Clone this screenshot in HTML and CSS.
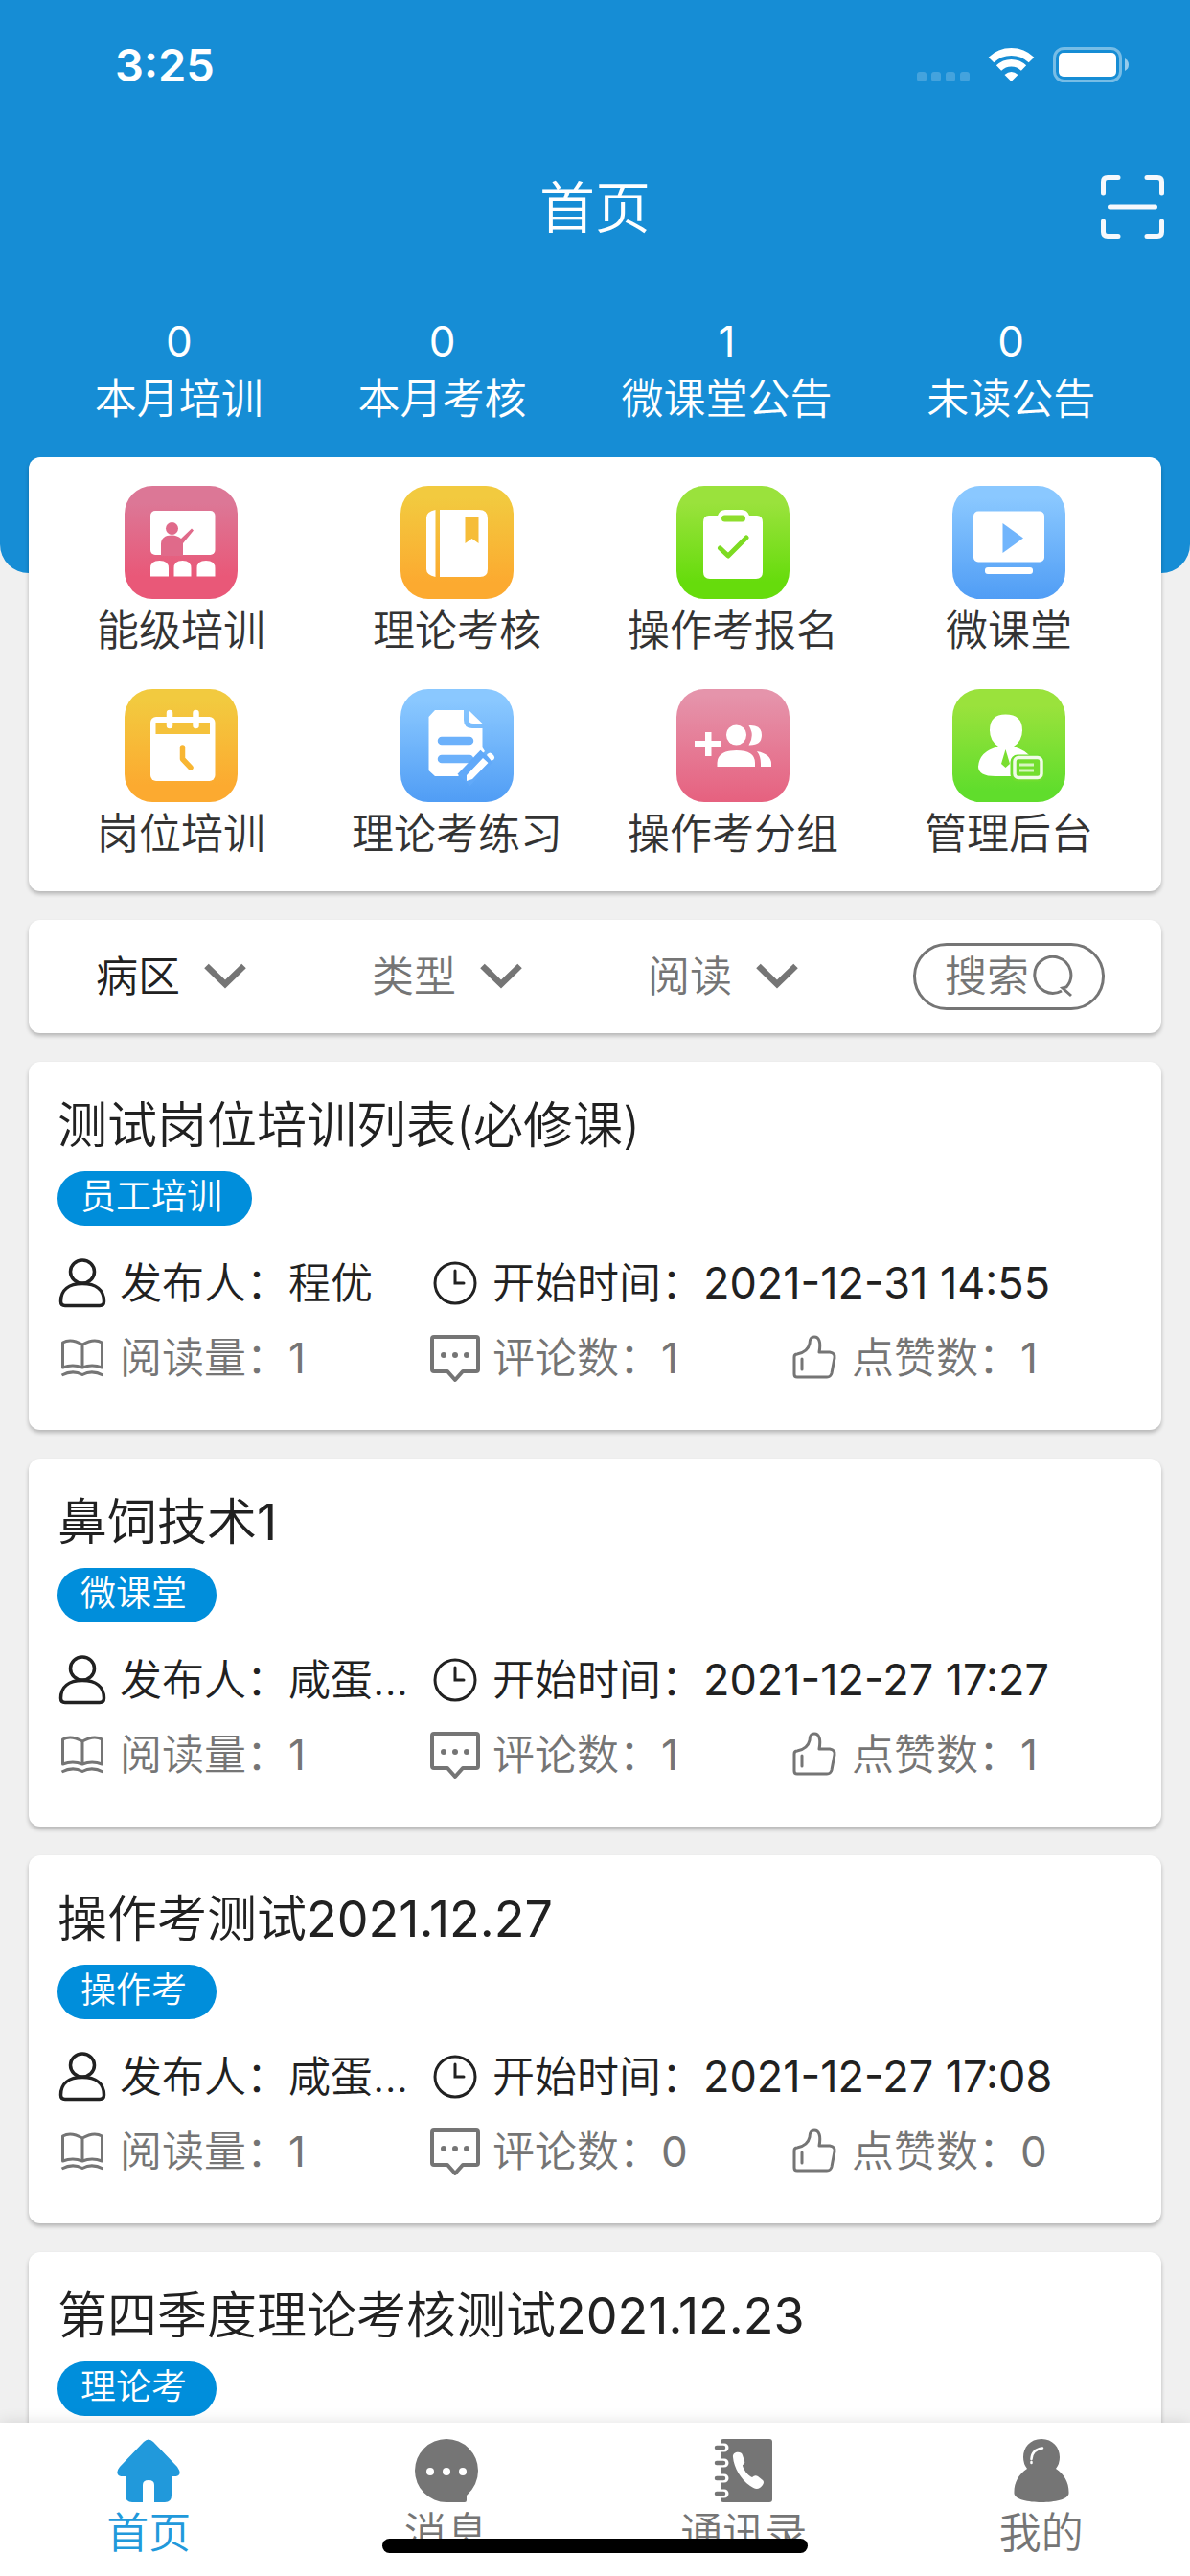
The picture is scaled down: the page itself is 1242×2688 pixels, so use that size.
FILE: index.html
```html
<!DOCTYPE html>
<html lang="zh-CN">
<head>
<meta charset="utf-8">
<meta name="viewport" content="width=device-width, initial-scale=1">
<title>首页</title>
<link rel="stylesheet" href="styles.css">
</head>
<body>
<svg class="sprite" aria-hidden="true">
  <symbol id="i-user" viewBox="0 0 52 52"><g fill="none" stroke="currentColor" stroke-width="3.500"><ellipse cx="26" cy="14" rx="12.500" ry="12"/><path d="M3.500 45C3.500 33 12 26.500 26 26.500S48.500 33 48.500 45Q48.500 49.500 44 49.500H8Q3.500 49.500 3.500 45z"/></g></symbol>
  <symbol id="i-clock" viewBox="0 0 52 52"><g fill="none" stroke="currentColor" stroke-width="3" stroke-linecap="round"><circle cx="26" cy="26" r="21"/><path d="M26 13V26H35"/></g></symbol>
  <symbol id="i-book" viewBox="0 0 52 52"><path fill="none" stroke="currentColor" stroke-width="3" stroke-linejoin="round" d="M26 12Q14 5 5.500 10V36Q16 32 26 36Q36 32 46.500 36V10Q38 5 26 12V36M4.500 44Q16 38 26 43.500Q36 38 47.500 44"/></symbol>
  <symbol id="i-comment" viewBox="0 0 52 52"><path fill="none" stroke="currentColor" stroke-width="4" stroke-linejoin="round" d="M4 4H48Q50 4 50 6V38Q50 40 48 40H34L26 49L18 40H4Q2 40 2 38V6Q2 4 4 4z"/><g fill="currentColor"><circle cx="14" cy="23" r="3"/><circle cx="26" cy="23" r="3"/><circle cx="38" cy="23" r="3"/></g></symbol>
  <symbol id="i-thumb" viewBox="0 0 52 52"><path fill="none" stroke="currentColor" stroke-width="3" stroke-linecap="round" stroke-linejoin="round" d="M5 25Q5 22 8 22Q19 20 21 11C21 6 23 4 26 4C31 4 33 10 31 20H42Q48 21 47 26L44 42Q43 46 39 46H8Q5 46 5 43zM13 27V38"/></symbol>
  <symbol id="i-down" viewBox="0 0 44 28"><path fill="none" stroke="currentColor" stroke-width="6.500" d="M2.500 3L22 22L41.500 3"/></symbol>
</svg>

<div class="app">
  <header class="header">
    <div class="status">
      <time class="clock">3:25</time>
      <svg class="signals" viewBox="0 0 222 38" aria-hidden="true">
        <g fill="#fff" fill-opacity=".2"><rect y="26" width="10" height="10" rx="3"/><rect x="15" y="26" width="10" height="10" rx="3"/><rect x="30" y="26" width="10" height="10" rx="3"/><rect x="45" y="26" width="10" height="10" rx="3"/></g>
        <g fill="none" stroke="#fff"><path stroke-width="8" d="M77.500 13.500A30 30 0 0 1 119.500 13.500"/><path stroke-width="7.500" d="M85.500 22A18.500 18.500 0 0 1 111.500 22"/></g>
        <path fill="#fff" d="M98.500 36L91.500 29Q98.500 23 105.500 29z"/>
        <rect x="143.500" y="1.500" width="69" height="34" rx="10" fill="none" stroke="#fff" stroke-opacity=".42" stroke-width="3"/>
        <rect x="148" y="6" width="60" height="25" rx="5" fill="#fff"/>
        <path fill="#fff" fill-opacity=".55" d="M217 12Q221 14 221 18.500T217 25z"/>
      </svg>
    </div>
    <div class="nav">
      <h1 class="nav-title">首页</h1>
      <button class="scan" type="button" aria-label="扫一扫">
        <svg viewBox="0 0 66 66"><path fill="none" stroke="#f5f8fc" stroke-width="5" stroke-linecap="round" d="M2.500 18V7Q2.500 2.500 7 2.500H18M48 2.500H59Q63.500 2.500 63.500 7V18M63.500 48V59Q63.500 63.500 59 63.500H48M18 63.500H7Q2.500 63.500 2.500 59V48M9.500 33H56.500"/></svg>
      </button>
    </div>
    <dl class="stats">
      <div class="stat"><dt>本月培训</dt><dd>0</dd></div>
      <div class="stat"><dt>本月考核</dt><dd>0</dd></div>
      <div class="stat"><dt>微课堂公告</dt><dd>1</dd></div>
      <div class="stat"><dt>未读公告</dt><dd>0</dd></div>
    </dl>
  </header>

  <main class="content">
    <nav class="panel menu">
      <a class="menu-item" href="#"><svg class="tile tile-pink" viewBox="0 0 118 118"><g fill="#fff"><rect x="27" y="26" width="67.500" height="46" rx="5"/><path d="M27 94.500V86Q27 78 36.500 78T46 86V94.500zM51.500 94.500V86Q51.500 78 60.500 78T69.500 86V94.500zM75.500 94.500V86Q75.500 78 85 78T94.500 86V94.500z"/></g><g fill="#e06a8a"><circle cx="49.500" cy="44.500" r="6.500"/><path d="M38 73V61Q38 51.500 49.500 51.500Q55 51.500 59 55L70 44.500L72 46.500L61 60V73z"/></g></svg>能级培训</a>
      <a class="menu-item" href="#"><svg class="tile tile-gold" viewBox="0 0 118 118"><path fill="#fff" d="M36.500 25V95Q27 93 27 87V33Q27 27 36.500 25zM41 25H82Q91 25 91 34V87Q91 95 83 95H41z"/><path fill="#f6bd38" d="M67.500 33H81.500V60L74.500 55L67.500 60z"/></svg>理论考核</a>
      <a class="menu-item" href="#"><svg class="tile tile-green" viewBox="0 0 118 118"><path fill="#fff" d="M34 31H43Q45 25 51 25H68Q74 25 76 31H84Q90 31 90 38V90Q90 97 83 97H35Q28 97 28 90V38Q28 31 34 31z"/><rect x="47" y="30.500" width="25" height="7" rx="3.500" fill="#8ede2d"/><path fill="none" stroke="#7ddb22" stroke-width="5" stroke-linecap="round" stroke-linejoin="round" d="M45.500 65L54 73L73 54"/></svg>操作考报名</a>
      <a class="menu-item" href="#"><svg class="tile tile-blue" viewBox="0 0 118 118"><rect x="22" y="26.500" width="74" height="53" rx="5" fill="#fff"/><rect x="34" y="85" width="50" height="7" rx="3" fill="#fff"/><path fill="#71b5fc" d="M52.500 39L74 54.500L52.500 70z"/></svg>微课堂</a>
      <a class="menu-item" href="#"><svg class="tile tile-gold" viewBox="0 0 118 118"><rect x="27" y="29" width="67.500" height="67" rx="6" fill="#fff"/><path fill="#f5c23b" d="M32.500 35H89V47H32.500z"/><path fill="none" stroke="#fff" stroke-width="6.500" stroke-linecap="round" d="M47 25V38M74.500 25V38"/><path fill="none" stroke="#f8b633" stroke-width="5.500" stroke-linecap="round" stroke-linejoin="round" d="M60.500 61V73L69 82"/></svg>岗位培训</a>
      <a class="menu-item" href="#"><svg class="tile tile-blue" viewBox="0 0 118 118"><path fill="#fff" d="M36 22H66V32Q66 41 75 41H85.500V61L88 65L60 91H36L29.500 85V29zM71 22L85.500 36H76Q71 36 71 31z"/><path fill="none" stroke="#6cb1fb" stroke-width="8.500" stroke-linecap="round" d="M43 54H72M43 73H72"/><path fill="none" stroke="#61a9f9" stroke-width="18" d="M66 95L90 70"/><path fill="#fff" d="M69 96V90L86 72L91.500 77L75 94zM90 69Q93 64 97 69Q100 73 95 75z"/></svg>理论考练习</a>
      <a class="menu-item" href="#"><svg class="tile tile-rose" viewBox="0 0 118 118"><g fill="#fff"><path d="M30 45H36.500V54H47V61H36.500V70H30V61H19V54H30zM75.500 38Q89 37 89 48T75.500 58.500Q82 48 75.500 38zM84 65Q99 68 99 78V81H88V78Q88 70 84 65zM42.500 81V77Q43 64 62.500 64T82 77V81z"/><circle cx="62.500" cy="48" r="10.500"/></g></svg>操作考分组</a>
      <a class="menu-item" href="#"><svg class="tile tile-lime" viewBox="0 0 118 118"><path fill="#fff" d="M55.500 26.500Q73 26.500 73 43Q73 54 64 60Q75 63 83 72L88 91H45Q27 91 27 81Q28 65 48 60Q39 54 39 43Q39 26.500 55.500 26.500z"/><path fill="#7ade30" d="M55.500 63L60 78L55.500 82L51 78z"/><rect x="64" y="72" width="29" height="21" rx="4" fill="#70de2e" stroke="#70de2e" stroke-width="7"/><rect x="65" y="71.500" width="28" height="21" rx="4" fill="#73de2e" stroke="#f0fbe8" stroke-width="3.500"/><path stroke="#d5f5c0" stroke-width="3" d="M70 79H85M70 85H85"/></svg>管理后台</a>
    </nav>

    <form class="panel filters">
      <div class="filter filter-active"><select aria-label="病区"><option>病区</option></select><svg class="chevron"><use href="#i-down"/></svg></div>
      <div class="filter"><select aria-label="类型"><option>类型</option></select><svg class="chevron"><use href="#i-down"/></svg></div>
      <div class="filter"><select aria-label="阅读"><option>阅读</option></select><svg class="chevron"><use href="#i-down"/></svg></div>
      <button class="search" type="button">搜索<svg viewBox="0 0 44 44"><path fill="none" stroke="currentColor" stroke-width="3" d="M32 37A19 19 0 1 1 37 33L33 34L42 42"/></svg></button>
    </form>

    <article class="panel post">
      <h2 class="post-title">测试岗位培训列表(必修课)</h2>
      <span class="badge">员工培训</span>
      <div class="meta"><span class="cell"><svg class="icon"><use href="#i-user"/></svg>发布人：程优</span><span class="cell cell-wide"><svg class="icon"><use href="#i-clock"/></svg><span>开始时间：<time>2021-12-31 14:55</time></span></span></div>
      <div class="meta meta-muted"><span class="cell"><svg class="icon"><use href="#i-book"/></svg><span>阅读量：<b>1</b></span></span><span class="cell"><svg class="icon"><use href="#i-comment"/></svg><span>评论数：<b>1</b></span></span><span class="cell"><svg class="icon"><use href="#i-thumb"/></svg><span>点赞数：<b>1</b></span></span></div>
    </article>
    <article class="panel post">
      <h2 class="post-title">鼻饲技术<b>1</b></h2>
      <span class="badge">微课堂</span>
      <div class="meta"><span class="cell"><svg class="icon"><use href="#i-user"/></svg>发布人：咸蛋...</span><span class="cell cell-wide"><svg class="icon"><use href="#i-clock"/></svg><span>开始时间：<time>2021-12-27 17:27</time></span></span></div>
      <div class="meta meta-muted"><span class="cell"><svg class="icon"><use href="#i-book"/></svg><span>阅读量：<b>1</b></span></span><span class="cell"><svg class="icon"><use href="#i-comment"/></svg><span>评论数：<b>1</b></span></span><span class="cell"><svg class="icon"><use href="#i-thumb"/></svg><span>点赞数：<b>1</b></span></span></div>
    </article>
    <article class="panel post">
      <h2 class="post-title">操作考测试<b>2021.12.27</b></h2>
      <span class="badge">操作考</span>
      <div class="meta"><span class="cell"><svg class="icon"><use href="#i-user"/></svg>发布人：咸蛋...</span><span class="cell cell-wide"><svg class="icon"><use href="#i-clock"/></svg><span>开始时间：<time>2021-12-27 17:08</time></span></span></div>
      <div class="meta meta-muted"><span class="cell"><svg class="icon"><use href="#i-book"/></svg><span>阅读量：<b>1</b></span></span><span class="cell"><svg class="icon"><use href="#i-comment"/></svg><span>评论数：<b>0</b></span></span><span class="cell"><svg class="icon"><use href="#i-thumb"/></svg><span>点赞数：<b>0</b></span></span></div>
    </article>
    <article class="panel post">
      <h2 class="post-title">第四季度理论考核测试<b>2021.12.23</b></h2>
      <span class="badge">理论考</span>
    </article>
  </main>

  <nav class="tabbar">
    <a class="tab tab-active" href="#"><svg viewBox="0 0 68 68"><path fill="currentColor" d="M29 4Q34 -1 39 4L64 30Q68 36 66 38Q65 40 61 40H58V60Q58 67 51 67H40V49Q40 44 34 44T28 49V67H17Q10 67 10 60V40H7Q3 40 2 38Q0 35 4 30z"/></svg>首页</a>
    <a class="tab" href="#"><svg viewBox="0 0 68 68"><path fill="currentColor" d="M34 1A33 33 0 0 1 67 34Q67 49 55 60V65Q55 67 53 67H34A33 33 0 0 1 34 1z"/><g fill="#fff"><circle cx="17" cy="35" r="4"/><circle cx="34" cy="35" r="4"/><circle cx="51" cy="35" r="4"/></g></svg>消息</a>
    <a class="tab" href="#"><svg viewBox="0 0 68 68"><path fill="currentColor" d="M13 1H61Q64 1 64 4V64Q64 67 61 67H13Q10 67 10 64V4Q10 1 13 1z"/><g fill="none" stroke-linecap="round"><path stroke="#fff" stroke-width="9" d="M6 10H14M6 26H14M6 42H14M6 58H14"/><path stroke="currentColor" stroke-width="4.500" d="M6 10H13M6 26H13M6 42H13M6 58H13"/></g><path fill="#fff" d="M23 20C22 14 32 13 33 18L35 24Q36 27 33 28C33 32 39 40 43 41Q46 38 49 40L54 44Q56 46 54 49C50 55 45 53 41 50C31 43 24 31 23 20z"/></svg>通讯录</a>
    <a class="tab" href="#"><svg viewBox="0 0 68 68"><path fill="currentColor" d="M34 1C46 1 53 10 53 20Q53 27 49 32C58 38 63 47 62.500 58C61 70 7 70 5.500 58C5 47 10 38 19 32Q15 27 15 20C15 10 22 1 34 1z"/><path fill="none" stroke="#fff" stroke-width="2.500" stroke-linecap="round" d="M35 10.500Q24 12 23.500 22M23.500 25V26"/></svg>我的</a>
    <span class="home-indicator"></span>
  </nav>
</div>
</body>
</html>
```
FILE: styles.css
```css
* { box-sizing: border-box; }

body {
  margin: 0;
  background: #f0f0f0;
  color: #212121;
  font-family: Inter, "Noto Sans CJK SC", sans-serif;
  font-size: 44px;
  font-weight: 350;
  line-height: 62px;
}

h1, h2, dl, dd { margin: 0; font-weight: inherit; }
a { color: inherit; text-decoration: none; }
button, select {
  padding: 0;
  border: 0;
  background: none;
  color: inherit;
  font: inherit;
}
svg { display: block; flex: none; }
.sprite { position: absolute; width: 0; height: 0; }

/* figures are set a little heavier than the Chinese text */
b, dd, time { font-weight: 400; }

.app {
  display: flex;
  flex-direction: column;
  height: 100vh;
  overflow: hidden;
}

/* header */
.header {
  flex: none;
  padding-bottom: 152px;
  border-radius: 0 0 30px 30px;
  background: #168dd5;
  color: #fff;
}
.status {
  display: flex;
  align-items: center;
  justify-content: space-between;
  height: 132px;
  padding: 4px 63px 0 120px;
}
.clock { font-size: 47px; font-weight: 600; }
.signals { width: 222px; height: 38px; }
.nav {
  display: grid;
  grid-template-columns: 1fr auto 1fr;
  align-items: center;
  height: 168px;
  padding: 0 27px;
}
.nav-title { grid-column: 2; padding-top: 2px; font-size: 58px; line-height: 84px; }
.scan { justify-self: end; }
.scan svg { width: 66px; height: 66px; }
.stats {
  display: flex;
  justify-content: space-evenly;
  padding-top: 26px;
  line-height: 60px;
}
.stat {
  display: flex;
  flex-direction: column-reverse;
  align-items: center;
}

.content {
  display: flex;
  flex: 1;
  flex-direction: column;
  gap: 30px;
  min-height: 0;
  margin-top: -121px;
  padding: 0 30px;
  overflow: hidden;
}
.panel {
  flex: none;
  border-radius: 12px;
  background: #fff;
  box-shadow: 0 3px 4px rgba(0, 0, 0, .24);
}

.menu {
  display: grid;
  grid-template-columns: repeat(4, 1fr);
  row-gap: 30px;
  padding: 30px 15px 29px;
  color: #333;
}
.menu-item {
  display: flex;
  flex-direction: column;
  align-items: center;
  gap: 2px;
}
.tile { width: 118px; height: 118px; border-radius: 29px; }
.tile-pink { background: linear-gradient(#dc7796 15%, #e95878 80%); }
.tile-gold { background: linear-gradient(#f2ca3f 10%, #fcaa30 85%); }
.tile-green { background: linear-gradient(#9ae23c 15%, #66dc0c 85%); }
.tile-blue { background: linear-gradient(#8ac8ff 10%, #509df5); }
.tile-rose { background: linear-gradient(#e594ab 5%, #e6617f); }
.tile-lime { background: linear-gradient(#9ae23c 15%, #60dd2c 90%); }

.filters {
  display: grid;
  grid-template-columns: repeat(4, 1fr);
  align-items: center;
  height: 118px;
  padding: 0 15px;
  color: #757575;
}
.filter {
  display: flex;
  align-items: center;
  gap: 24px;
  padding-left: 55px;
}
.filter select { width: 89px; appearance: none; }
.filter-active select { color: #212121; }
.chevron { width: 44px; height: 28px; }
.search {
  display: flex;
  align-items: center;
  justify-content: center;
  justify-self: center;
  gap: 2px;
  width: 200px;
  height: 70px;
  border: 3px solid #757575;
  border-radius: 35px;
}
.search svg { width: 44px; height: 44px; }

.post {
  min-height: 384px;
  padding: 30px 30px 44px;
}
.post-title { font-size: 52px; line-height: 74px; }
.badge {
  display: block;
  width: fit-content;
  margin: 10px 0 29px;
  padding: 0 31px 4px 24px;
  border-radius: 29px;
  background: #008edb;
  color: #fff;
  font-size: 37px;
  line-height: 53px;
}
.meta {
  display: grid;
  grid-template-columns: 389fr 375fr 358fr;
}
.meta time { font-size: 45px; }
.meta-muted { margin-top: 16px; color: #757575; }
.cell {
  display: flex;
  align-items: center;
  gap: 13px;
  height: 62px;
  white-space: nowrap;
}
.cell-wide { grid-column: span 2; }
.icon { width: 52px; height: 52px; }

/* bottom tabs */
.tabbar {
  position: relative;
  display: grid;
  flex: none;
  grid-template-columns: repeat(4, 1fr);
  height: 160px;
  padding-top: 16px;
  background: #fff;
  box-shadow: 0 0 16px rgba(0, 0, 0, .12);
  color: #757575;
}
.tab {
  display: flex;
  flex-direction: column;
  align-items: center;
}
.tab svg { width: 68px; height: 68px; }
.tab-active { color: #2199db; }
.home-indicator {
  position: absolute;
  bottom: 24px;
  left: 50%;
  width: 444px;
  height: 15px;
  margin-left: -222px;
  border-radius: 8px;
  background: #000;
}
```
